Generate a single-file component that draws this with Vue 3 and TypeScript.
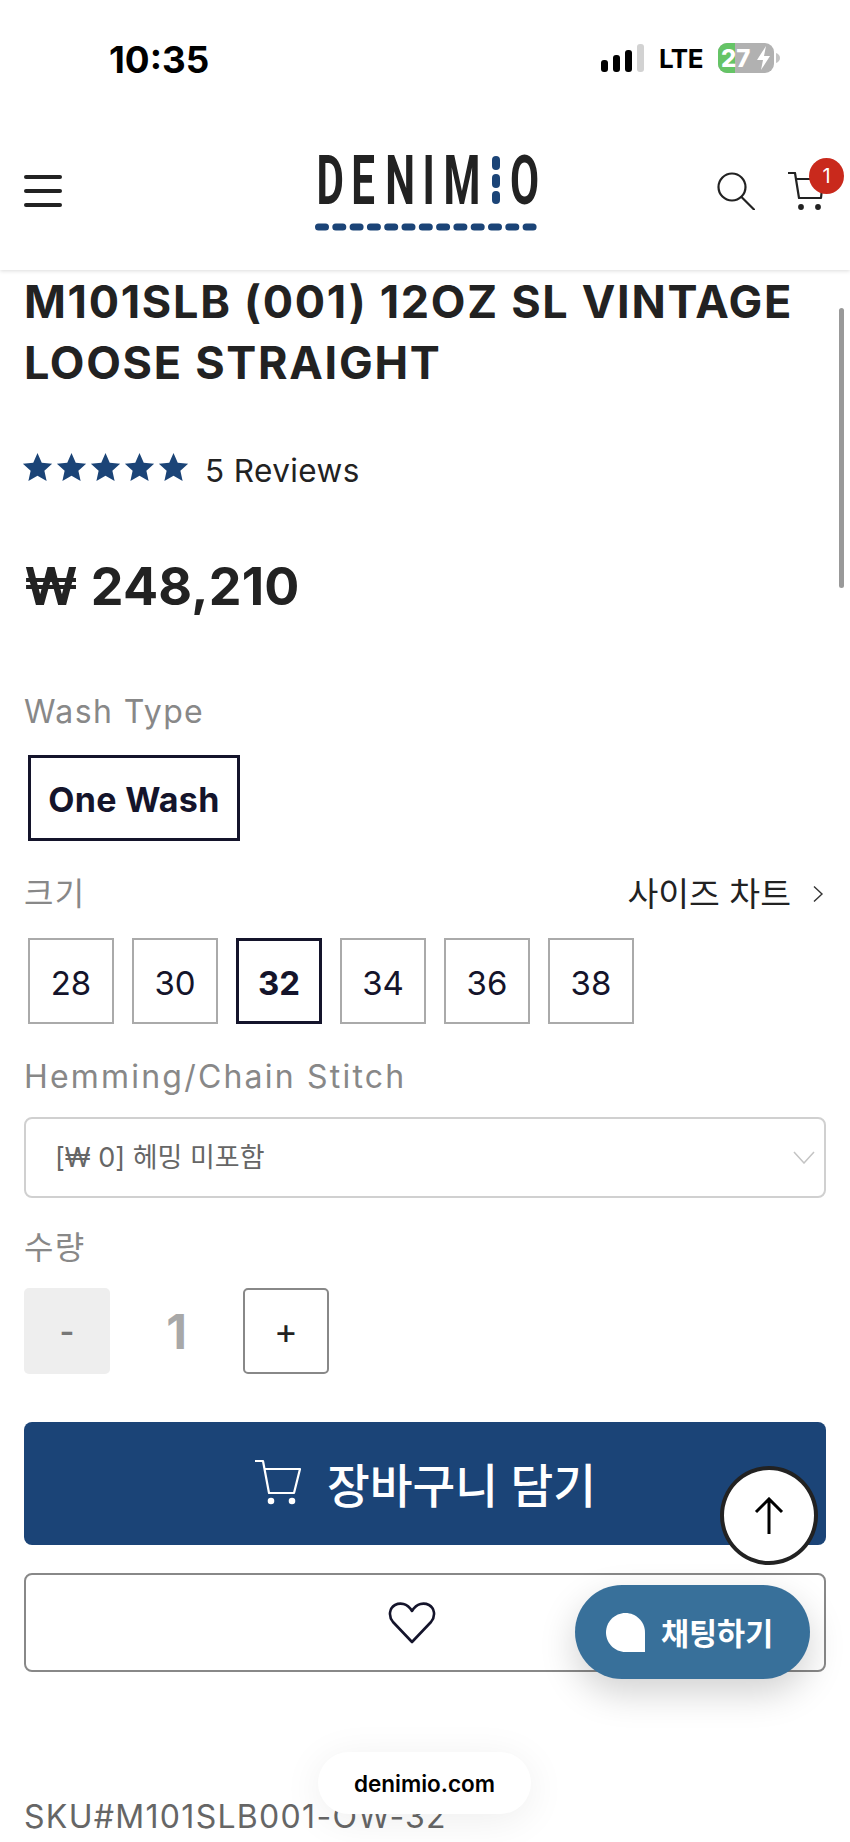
<script setup lang="ts">
const sizes = ['28', '30', '32', '34', '36', '38']
const selectedSize = '32'
const starPath = 'M12 .8l3.4 7.800 8.300.8-6.200 5.500 1.800 8.300L12 18.900l-7.300 4.300 1.800-8.300L.3 9.400l8.300-.8z'
</script>

<template>
  <div class="page">
    <header class="top">
      <div class="status">
        <span class="time">10:35</span>
        <div class="status-right">
          <div class="signal">
            <i style="height: 12px" />
            <i style="height: 17px" />
            <i style="height: 22px" />
            <i class="off" style="height: 28px" />
          </div>
          <span class="lte">LTE</span>
          <svg class="battery" width="62" height="30" viewBox="0 0 62 30">
            <rect x="0" y="0" width="56" height="30" rx="9" fill="#b1b1b1" />
            <path d="M9 0h8v30H9a9 9 0 0 1-9-9V9a9 9 0 0 1 9-9z" fill="#65c466" />
            <path d="M58 10c2.500.8 4 2.600 4 5s-1.500 4.200-4 5z" fill="#c4c4c4" />
            <text x="3" y="24" class="battery-text">27</text>
            <path d="M48 3l-9 14h6l-2 10 9-14h-6z" fill="#fff" />
          </svg>
        </div>
      </div>
      <nav class="nav">
        <div class="burger">
          <i /><i /><i />
        </div>
        <svg class="logo" width="242" height="108" viewBox="-10 0 242 108">
          <text class="logo-text" y="65" transform="scale(0.62 1)" x="4 60 115 175 209">DENIM</text>
          <text class="logo-text" y="65" transform="scale(0.62 1)" x="316">O</text>
          <rect x="178" y="17" width="8" height="14" rx="4" fill="#1b4477" />
          <rect x="178" y="35" width="8" height="14" rx="4" fill="#1b4477" />
          <rect x="178" y="52" width="8" height="13" rx="4" fill="#1b4477" />
          <line x1="4.500" y1="88" x2="222" y2="88" stroke="#1b4477" stroke-width="7" stroke-linecap="round" stroke-dasharray="7 10.300" />
        </svg>
        <div class="nav-icons">
          <svg width="38" height="38" viewBox="0 0 38 38" fill="none" stroke="#222" stroke-width="2.200">
            <circle cx="15" cy="15" r="13.500" />
            <path d="M24.500 25L37 37.500" stroke-linecap="round" />
          </svg>
          <div class="cart">
            <svg width="38" height="38" viewBox="0 0 38 38" fill="none" stroke="#222" stroke-width="2.200">
              <path d="M1 1h7l4 25h22l2-19H9" stroke-linejoin="round" />
              <circle cx="14" cy="35" r="1.800" fill="#222" />
              <circle cx="31" cy="35" r="1.800" fill="#222" />
            </svg>
            <span class="badge">1</span>
          </div>
        </div>
      </nav>
    </header>

    <main class="main">
      <h1 class="title">M101SLB (001) 12OZ SL VINTAGE LOOSE STRAIGHT</h1>

      <div class="reviews">
        <div class="stars">
          <svg v-for="n in 5" :key="n" width="31" height="30" viewBox="0 0 24 24">
            <path :d="starPath" fill="#1b4477" />
          </svg>
        </div>
        <span class="review-count">5 Reviews</span>
      </div>

      <div class="price">₩ 248,210</div>

      <div class="label label-wash">Wash Type</div>
      <button class="chip wash selected">One Wash</button>

      <div class="size-head">
        <span class="label">크기</span>
        <span class="chart">
          사이즈 차트
          <svg width="12" height="18" viewBox="0 0 12 18" fill="none" stroke="#333" stroke-width="1.400">
            <path d="M2 1.500L10 9l-8 7.500" />
          </svg>
        </span>
      </div>
      <div class="sizes">
        <button
          v-for="size in sizes"
          :key="size"
          class="chip size"
          :class="{ selected: size === selectedSize }"
        >
          {{ size }}
        </button>
      </div>

      <div class="label label-hem">Hemming/Chain Stitch</div>
      <div class="select">
        <span class="select-text">[₩ 0] 헤밍 미포함</span>
        <svg width="22" height="13" viewBox="0 0 22 13" fill="none" stroke="#c4c4c4" stroke-width="1.500">
          <path d="M1 1l10 11L21 1" />
        </svg>
      </div>

      <div class="label label-qty">수량</div>
      <div class="qty">
        <span class="qty-btn minus">-</span>
        <span class="qty-value">1</span>
        <span class="qty-btn plus">+</span>
      </div>

      <button class="add">
        <svg width="48" height="46" viewBox="0 0 48 46" fill="none" stroke="#fff" stroke-width="2.200">
          <path d="M1 2h8l6 32h25l6-24H11" stroke-linejoin="round" />
          <circle cx="17" cy="42" r="2.200" fill="#fff" />
          <circle cx="38" cy="42" r="2.200" fill="#fff" />
        </svg>
        <span>장바구니 담기</span>
      </button>

      <button class="wish">
        <svg width="48" height="42" viewBox="0 0 48 42" fill="none" stroke="#14142b" stroke-width="2.600">
          <path d="M24 40L5 20C0 14 1.500 6 7 3c5-2.500 12-2 17 6 5-8 12-8.500 17-6 5.500 3 7 11 2 17z" stroke-linejoin="round" />
        </svg>
      </button>

      <div class="sku">SKU#M101SLB001-OW-32</div>
    </main>

    <div class="scrollbar" />

    <button class="to-top">
      <svg width="30" height="38" viewBox="0 0 30 38" fill="none" stroke="#000" stroke-width="3">
        <path d="M15 37V2M2 15L15 2l13 13" />
      </svg>
    </button>

    <div class="chat">
      <svg width="39" height="39" viewBox="0 0 39 39">
        <path d="M19.500 0C30 0 39 8.500 39 19.500V39H19.500C8.500 39 0 30 0 19.500S8.500 0 19.500 0z" fill="#fff" />
      </svg>
      <span>채팅하기</span>
    </div>

    <div class="domain">denimio.com</div>
  </div>
</template>

<style scoped>
.page {
  position: relative;
  width: 850px;
  height: 1842px;
  overflow: hidden;
  background: #fff;
  color: #222;
  font-family: Inter, "Noto Sans CJK KR", sans-serif;
}

.top {
  height: 270px;
  background: #fff;
  box-shadow: 0 1px 4px rgba(0, 0, 0, 0.14);
  position: relative;
}

.status {
  height: 116px;
  padding: 0 70px 0 109px;
  display: flex;
  align-items: center;
  justify-content: space-between;
  color: #000;
}

.time {
  font-size: 36.800px;
  font-weight: 700;
  padding-top: 2px;
}

.status-right {
  display: flex;
  align-items: center;
  gap: 15px;
}

.signal {
  display: flex;
  align-items: flex-end;
  gap: 5px;
  height: 28px;
}

.signal i {
  display: block;
  width: 7px;
  background: #000;
  border-radius: 3px;
}

.signal i.off {
  background: #d2d2d2;
}

.lte {
  font-size: 26px;
  font-weight: 700;
  letter-spacing: -0.5px;
}

.battery-text {
  font: 800 24px Inter, sans-serif;
  fill: #fff;
}

.nav {
  height: 154px;
  padding: 0 6px;
  display: grid;
  grid-template-columns: 1fr auto 1fr;
  align-items: center;
}

.burger {
  display: flex;
  flex-direction: column;
  gap: 10px;
  width: 38px;
  margin: -4px 0 0 18px;
}

.burger i {
  display: block;
  height: 4px;
  background: #222;
  border-radius: 2px;
}

.logo {
  display: block;
}

.logo-text {
  font: 700 68px Roboto, sans-serif;
  fill: #222;
}

.nav-icons {
  display: flex;
  align-items: center;
  justify-content: flex-end;
  gap: 32px;
  margin-top: -4px;
}

.cart {
  position: relative;
  width: 57px;
  height: 38px;
}

.badge {
  position: absolute;
  top: -14px;
  right: 0;
  width: 35px;
  height: 36px;
  border-radius: 50%;
  background: #c9291c;
  color: #fff;
  font-size: 20px;
  display: flex;
  align-items: center;
  justify-content: center;
}

.main {
  padding: 0 24px;
}

.title {
  margin: 1px 0 0;
  font-size: 45px;
  line-height: 61px;
  font-weight: 700;
  letter-spacing: 1.700px;
}

.reviews {
  margin-top: 59px;
  display: flex;
  align-items: center;
  gap: 16px;
  height: 30px;
  margin-left: -2px;
}

.review-count {
  font-size: 31.500px;
  letter-spacing: 0.4px;
  line-height: 40px;
  margin-top: 7px;
}

.stars {
  display: flex;
  gap: 3px;
}

.stars svg {
  display: block;
}

.price {
  margin-top: 75px;
  font-size: 52px;
  line-height: 60px;
  font-weight: 700;
  letter-spacing: 0.2px;
}

.label {
  font-size: 32px;
  line-height: 40px;
  color: #888;
  letter-spacing: 1.400px;
}

.label-wash {
  margin-top: 75px;
}

.chip {
  display: flex;
  align-items: center;
  justify-content: center;
  box-sizing: border-box;
  background: #fff;
  border: 2px solid #aaa;
  color: #14142b;
  font-family: inherit;
  font-size: 33px;
  padding: 0;
}

.chip.selected {
  border: 3px solid #14142b;
  font-weight: 700;
}

.wash {
  width: 212px;
  height: 86px;
  margin: 23px 0 0 4px;
  padding-top: 3px;
  font-size: 34px;
  letter-spacing: 0.3px;
}

.size-head {
  margin-top: 33px;
  height: 40px;
  display: flex;
  align-items: center;
  justify-content: space-between;
}

.chart {
  display: flex;
  align-items: center;
  gap: 21px;
  font-size: 33.500px;
  line-height: 40px;
  color: #222;
  padding-right: 2px;
}

.sizes {
  margin: 24px 0 0 4px;
  display: flex;
  gap: 18px;
}

.size {
  width: 86px;
  height: 86px;
  padding-top: 3px;
}

.label-hem {
  margin-top: 33px;
  letter-spacing: 2.200px;
}

.select {
  margin-top: 20px;
  box-sizing: border-box;
  height: 81px;
  border: 2px solid #d0d0d0;
  border-radius: 8px;
  padding: 0 9px 0 29px;
  display: flex;
  align-items: center;
  justify-content: space-between;
  font-size: 27px;
  color: #666;
}

.select-text {
  margin-bottom: 5px;
}

.label-qty {
  margin-top: 30px;
}

.qty {
  margin-top: 20px;
  display: flex;
  align-items: center;
}

.qty-btn {
  box-sizing: border-box;
  width: 86px;
  height: 86px;
  border-radius: 5px;
  display: flex;
  align-items: center;
  justify-content: center;
  font-size: 36px;
}

.minus {
  background: #eee;
  color: #777;
  font-size: 32px;
  font-weight: 600;
}

.plus {
  border: 2px solid #888;
}

.qty-value {
  width: 133px;
  text-align: center;
  font-size: 48px;
  font-weight: 700;
  color: #a8a8a8;
}

.add {
  margin-top: 48px;
  width: 100%;
  height: 123px;
  border: 0;
  border-radius: 8px;
  background: #1b4477;
  color: #fff;
  font-family: inherit;
  font-size: 46.500px;
  font-weight: 500;
  display: flex;
  align-items: center;
  justify-content: center;
  gap: 25px;
  padding: 0 0 3px;
}

.wish {
  margin-top: 28px;
  width: 100%;
  height: 99px;
  box-sizing: border-box;
  border: 2px solid #888;
  border-radius: 8px;
  background: #fff;
  display: flex;
  align-items: center;
  justify-content: center;
  padding: 0 26px 0 0;
}

.sku {
  margin-top: 125px;
  font-size: 32px;
  line-height: 40px;
  letter-spacing: 1.300px;
  color: #666;
}

.scrollbar {
  position: absolute;
  left: 839px;
  top: 308px;
  width: 5px;
  height: 280px;
  border-radius: 3px;
  background: #999;
}

.to-top {
  position: absolute;
  left: 720px;
  top: 1466px;
  width: 98px;
  height: 99px;
  box-sizing: border-box;
  border: 4px solid #222;
  border-radius: 50%;
  background: #fff;
  padding: 0;
  display: flex;
  align-items: center;
  justify-content: center;
}

.chat {
  position: absolute;
  left: 575px;
  top: 1585px;
  width: 235px;
  height: 94px;
  box-sizing: border-box;
  padding-left: 31px;
  border-radius: 47px;
  background: #38709a;
  color: #fff;
  font-size: 30.500px;
  font-weight: 600;
  display: flex;
  align-items: center;
  gap: 16px;
  box-shadow: 0 14px 36px rgba(0, 0, 0, 0.18);
}

.domain {
  position: absolute;
  left: 318px;
  top: 1752px;
  width: 213px;
  height: 62px;
  border-radius: 31px;
  background: #fff;
  box-shadow: 0 6px 40px rgba(0, 0, 0, 0.07);
  color: #000;
  font-size: 22.500px;
  font-weight: 600;
  display: flex;
  align-items: center;
  justify-content: center;
}
</style>
